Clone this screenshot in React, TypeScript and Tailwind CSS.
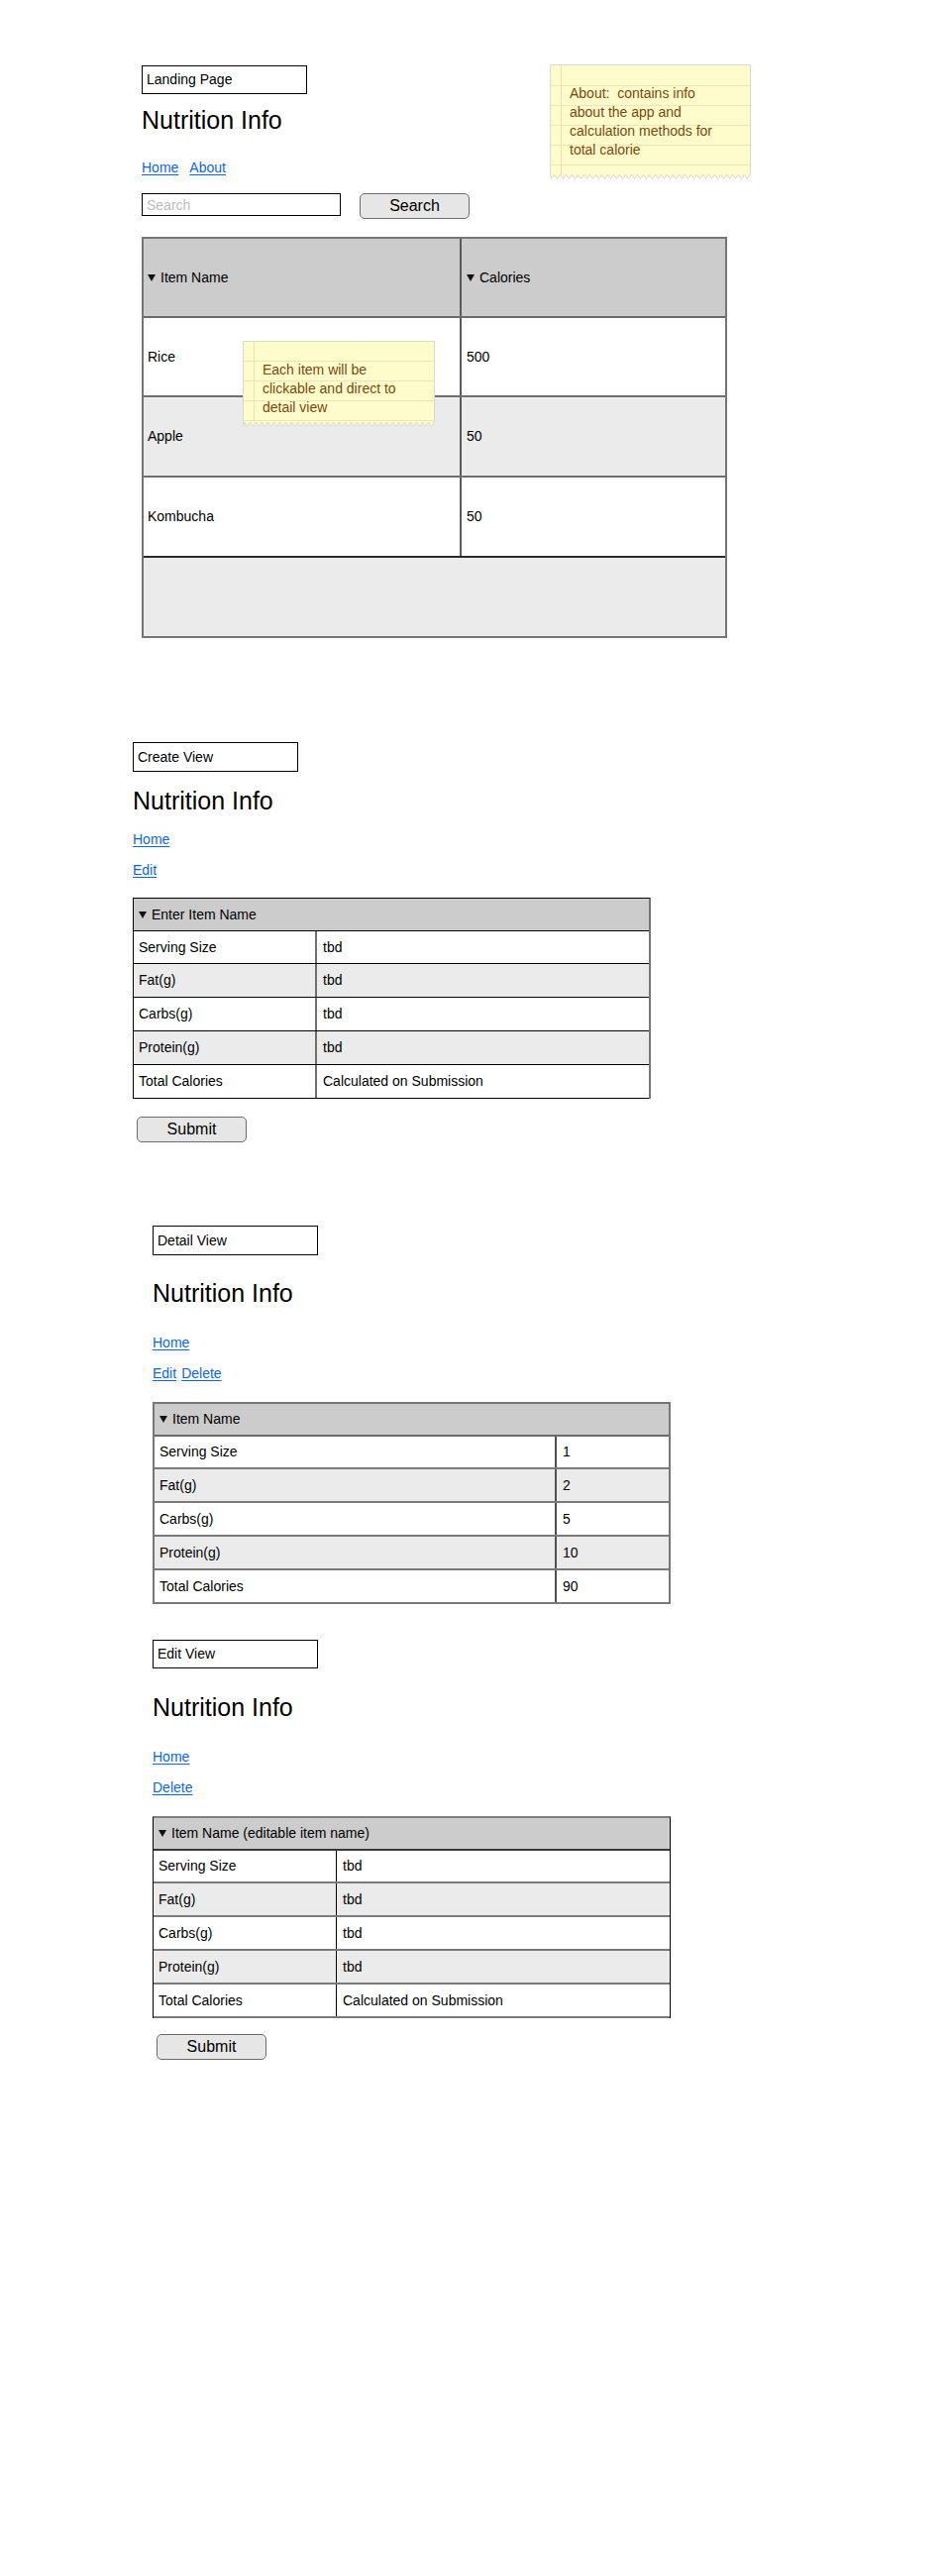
import React from "react";

type Row = [string, string];

const createRows: Row[] = [
  ["Serving Size", "tbd"],
  ["Fat(g)", "tbd"],
  ["Carbs(g)", "tbd"],
  ["Protein(g)", "tbd"],
  ["Total Calories", "Calculated on Submission"],
];

const detailRows: Row[] = [
  ["Serving Size", "1"],
  ["Fat(g)", "2"],
  ["Carbs(g)", "5"],
  ["Protein(g)", "10"],
  ["Total Calories", "90"],
];

function Caret() {
  return (
    <svg width="8" height="7" viewBox="0 0 8 7" className="shrink-0 mr-[5px]">
      <polygon points="0,0 8,0 4,7" fill="#111" />
    </svg>
  );
}

function ViewLabel({ text, className }: { text: string; className: string }) {
  return (
    <div className={`w-[167px] border border-black flex items-center pl-[4px] text-[14px] text-black ${className}`}>
      {text}
    </div>
  );
}

function Title({ className }: { className: string }) {
  return <h1 className={`text-[25px] leading-[30px] text-black ${className}`}>Nutrition Info</h1>;
}

function Link({ children }: { children: React.ReactNode }) {
  return <a className="text-[#0b66e4] underline underline-offset-[2px] cursor-pointer">{children}</a>;
}

function SubmitButton({ className }: { className: string }) {
  return (
    <button className={`w-[111px] h-[26px] rounded-[5px] border border-[#6b6b6b] bg-[#e6e6e6] text-[16px] text-black ${className}`}>
      Submit
    </button>
  );
}

// paper note with ruled lines and a torn (zig-zag) bottom edge
function StickyNote({
  w,
  h,
  rules,
  lines,
  className,
}: {
  w: number;
  h: number;
  rules: number[];
  lines: string[];
  className: string;
}) {
  const body = h - 5;
  let d = `M0.5,0.5 H${w - 0.5} V${body}`;
  let up = false;
  for (let x = w - 0.5; x > 0; x -= 3) {
    d += ` L${Math.max(x - 3, 0.5)},${up ? body : h - 0.5}`;
    up = !up;
  }
  d += " Z";
  return (
    <div className={`absolute ${className}`}>
      <svg width={w} height={h} className="absolute inset-0">
        <path d={d} fill="#fefccb" stroke="#d9d9d2" strokeWidth="1" />
        {rules.map((y) => (
          <line key={y} x1="1" x2={w - 1} y1={y + 0.5} y2={y + 0.5} stroke="#ebe6b8" strokeWidth="1" />
        ))}
        <line x1="11.5" x2="11.5" y1="1" y2={body} stroke="#f3dcae" strokeWidth="1" />
      </svg>
      <div className="relative pl-[20px] pt-[20px] text-[14px] leading-[19px] text-[#7c4710] whitespace-pre">
        {lines.map((l) => (
          <div key={l}>{l}</div>
        ))}
      </div>
    </div>
  );
}

function FormTable({
  header,
  rows,
  wrap,
  colA,
  rowLine,
  headerLine,
}: {
  header: string;
  rows: Row[];
  wrap: string;
  colA: string;
  rowLine: string;
  headerLine: string;
}) {
  return (
    <div className={`w-[523px] text-[14px] text-black ${wrap}`}>
      <div className={`h-[33px] bg-[#cccccc] flex items-center pl-[5px] ${headerLine}`}>
        <Caret />
        <span>{header}</span>
      </div>
      {rows.map(([k, v], i) => (
        <div
          key={k}
          className={`flex ${i === 0 ? "h-[33px]" : "h-[34px]"} ${rowLine} ${i % 2 === 1 ? "bg-[#ebebeb]" : "bg-white"}`}
        >
          <div className={`flex items-center pl-[5px] shrink-0 ${colA}`}>{k}</div>
          <div className="flex items-center pl-[6px] flex-1">{v}</div>
        </div>
      ))}
    </div>
  );
}

export default function App() {
  return (
    <div className="w-[960px] min-h-[2600px] bg-white font-['Liberation_Sans',Arial,sans-serif] text-black">
      {/* Landing page */}
      <section className="relative pt-[66px] pl-[143px]">
        <ViewLabel text="Landing Page" className="h-[29px]" />
        <Title className="mt-[11px]" />
        <div className="mt-[23px] flex gap-[11px] text-[14px] leading-[20px]">
          <Link>Home</Link>
          <Link>About</Link>
        </div>
        <div className="mt-[16px] flex items-start gap-[19px]">
          <input
            placeholder="Search"
            className="w-[201px] h-[23px] border border-black px-[4px] text-[14px] placeholder:text-[#bdbdbd] outline-none"
          />
          <button className="w-[111px] h-[26px] rounded-[5px] border border-[#6b6b6b] bg-[#e6e6e6] text-[16px] text-black">
            Search
          </button>
        </div>

        <div className="mt-[18px] w-[591px] border-2 border-[#757575] text-[14px]">
          <div className="grid grid-cols-[321px_1fr] h-[80px] bg-[#cccccc] border-b-2 border-[#6a6a6a]">
            <div className="flex items-center pl-[4px] border-r-2 border-[#5a5a5a]">
              <Caret />
              Item Name
            </div>
            <div className="flex items-center pl-[5px]">
              <Caret />
              Calories
            </div>
          </div>
          <div className="grid grid-cols-[321px_1fr] h-[80px] bg-white border-b-2 border-[#6f6f6f]">
            <div className="flex items-center pl-[4px] border-r-2 border-[#5a5a5a]">Rice</div>
            <div className="flex items-center pl-[5px]">500</div>
          </div>
          <div className="grid grid-cols-[321px_1fr] h-[81px] bg-[#ebebeb] border-b-2 border-[#6f6f6f]">
            <div className="flex items-center pl-[4px] border-r-2 border-[#5a5a5a]">Apple</div>
            <div className="flex items-center pl-[5px]">50</div>
          </div>
          <div className="grid grid-cols-[321px_1fr] h-[81px] bg-white border-b-2 border-[#2a2a2a]">
            <div className="flex items-center pl-[4px] border-r-2 border-[#5a5a5a]">Kombucha</div>
            <div className="flex items-center pl-[5px]">50</div>
          </div>
          <div className="h-[79px] bg-[#ebebeb]" />
        </div>

        <StickyNote
          className="left-[555px] top-[65px]"
          w={203}
          h={116}
          rules={[21, 41, 61, 81, 101]}
          lines={["About:  contains info", "about the app and", "calculation methods for", "total calorie"]}
        />
        <StickyNote
          className="left-[245px] top-[344px]"
          w={194}
          h={87}
          rules={[20, 40, 60, 80]}
          lines={["Each item will be", "clickable and direct to", "detail view"]}
        />
      </section>

      {/* Create view */}
      <section className="pl-[134px] mt-[105px]">
        <ViewLabel text="Create View" className="h-[30px]" />
        <Title className="mt-[14px]" />
        <div className="mt-[14px] text-[14px] leading-[20px]">
          <Link>Home</Link>
        </div>
        <div className="mt-[11px] text-[14px] leading-[20px]">
          <Link>Edit</Link>
        </div>
        <FormTable
          header="Enter Item Name"
          rows={createRows}
          wrap="mt-[18px] border-t border-l border-black border-r-2 border-r-[#777777]"
          headerLine="border-b border-black"
          rowLine="border-b border-black"
          colA="w-[185px] border-r-2 border-[#6e6e6e]"
        />
        <SubmitButton className="mt-[18px] ml-[4px]" />
      </section>

      {/* Detail view */}
      <section className="pl-[154px] mt-[84px]">
        <ViewLabel text="Detail View" className="h-[30px]" />
        <Title className="mt-[23px]" />
        <div className="mt-[25px] text-[14px] leading-[20px]">
          <Link>Home</Link>
        </div>
        <div className="mt-[11px] flex gap-[5px] text-[14px] leading-[20px]">
          <Link>Edit</Link>
          <Link>Delete</Link>
        </div>
        <FormTable
          header="Item Name"
          rows={detailRows}
          wrap="mt-[19px] border-t-2 border-x-2 border-[#777777]"
          headerLine="border-b-2 border-[#6a6a6a]"
          rowLine="border-b-2 border-[#7a7a7a]"
          colA="w-[406px] border-r-2 border-[#505050]"
        />
      </section>

      {/* Edit view */}
      <section className="pl-[154px] mt-[36px] pb-[40px]">
        <ViewLabel text="Edit View" className="h-[29px]" />
        <Title className="mt-[24px]" />
        <div className="mt-[25px] text-[14px] leading-[20px]">
          <Link>Home</Link>
        </div>
        <div className="mt-[11px] text-[14px] leading-[20px]">
          <Link>Delete</Link>
        </div>
        <FormTable
          header="Item Name (editable item name)"
          rows={createRows}
          wrap="mt-[19px] border-t-2 border-t-[#808080] border-l border-l-black border-r border-r-black"
          headerLine="border-b-2 border-[#3a3a3a]"
          rowLine="border-b-2 border-[#7a7a7a]"
          colA="w-[185px] border-r border-black"
        />
        <SubmitButton className="mt-[16px] ml-[4px]" />
      </section>
    </div>
  );
}
